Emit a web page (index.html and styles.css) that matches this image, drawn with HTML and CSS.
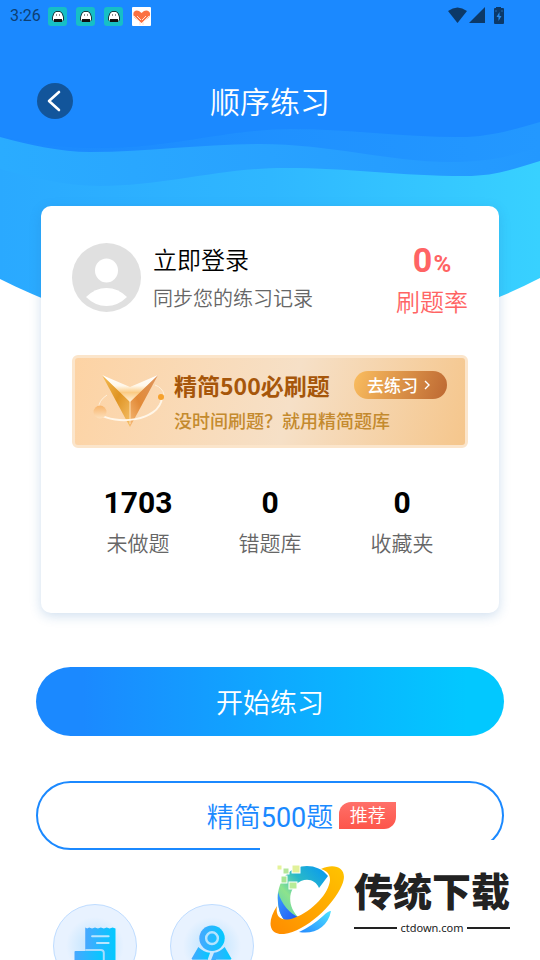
FILE: index.html
```html
<!DOCTYPE html>
<html lang="zh-CN">
<head>
    <meta charset="UTF-8">
    <meta name="viewport" content="width=device-width, initial-scale=1.0">
    <title>顺序练习</title>
    <link rel="stylesheet" href="styles.css">
</head>
<body>
    <!-- Shared icon shapes -->
    <svg class="sprite" aria-hidden="true">
        <defs>
            <linearGradient id="iconBlue" x1="0" y1="0" x2="1" y2="0">
                <stop offset="0" stop-color="#47a8ff"/>
                <stop offset="1" stop-color="#02c9ff"/>
            </linearGradient>
            <symbol id="ghost" viewBox="0 0 19 19">
                <rect width="19" height="19" rx="3" fill="#16bfc6"/>
                <path d="M4.500 13V10L6 6L8 4.500H12L14 6L15.500 10V13L14 14.500H6Z" fill="#fff" stroke="#173c42" stroke-width="1"/>
                <path d="M6 12H14V15H6Z" fill="#111"/>
                <path d="M8 8H9M11 8H12" stroke="#222" stroke-width="1"/>
            </symbol>
        </defs>
    </svg>

    <div class="page">
        <svg class="waves" viewBox="0 0 540 340" preserveAspectRatio="none" aria-hidden="true">
            <defs>
                <linearGradient id="waveBase" x1="0" y1="0" x2="1" y2="0">
                    <stop offset="0" stop-color="#2aa9ff"/>
                    <stop offset="0.5" stop-color="#2fb7ff"/>
                    <stop offset="1" stop-color="#38d1ff"/>
                </linearGradient>
                <linearGradient id="waveMid" x1="0" y1="0" x2="1" y2="0">
                    <stop offset="0" stop-color="#2aacff"/>
                    <stop offset="0.5" stop-color="#28a2ff"/>
                    <stop offset="1" stop-color="#2398ff"/>
                </linearGradient>
                <linearGradient id="waveTop" x1="0" y1="0" x2="1" y2="0">
                    <stop offset="0" stop-color="#1b89ff"/>
                    <stop offset="1" stop-color="#2398ff"/>
                </linearGradient>
            </defs>
            <path fill="url(#waveBase)" d="M0 0H540V278C455 322 380 336 270 336C160 336 90 324 0 279Z"/>
            <path fill="url(#waveMid)" d="M0 0H540V161C510 170 495 176 465 176C400 176 350 168 285 168C220 168 165 186 100 186C65 186 30 177 0 169Z"/>
            <path fill="url(#waveTop)" d="M0 0H540V147C510 156 490 162 450 162C390 162 330 144 260 144C200 144 150 152 90 152C60 152 30 145 0 137Z"/>
            <path fill="#1b89ff" d="M0 0H540V122C515 129 490 137 460 137C400 137 350 129 290 129C230 129 170 148 100 148C60 148 30 143 0 136Z"/>
        </svg>

        <div class="status-bar">
            <span class="time">3:26</span>
            <svg class="app-icon"><use href="#ghost"/></svg>
            <svg class="app-icon"><use href="#ghost"/></svg>
            <svg class="app-icon"><use href="#ghost"/></svg>
            <svg class="app-icon" viewBox="0 0 19 19">
                <rect width="19" height="19" rx="1" fill="#fff"/>
                <path d="M9.500 16L3 11C-1 6 3 2 7 4L9.500 6L12 4C16 2 21 6 16 11Z" fill="#fb7142"/>
                <path d="M2 9L8 15V18M17 9L11 15V18M5 9L9 13M14 9L10 13" fill="none" stroke="#ffe1d4" stroke-width="1"/>
            </svg>
            <svg class="system-icons" viewBox="0 0 56 18">
                <path d="M0 4Q9.500 -3 19 4L9.500 16Z" fill="#0c3968"/>
                <path d="M21 16H37V0Z" fill="#0c3968"/>
                <path d="M48 0H53V1H55Q56 1 56 2V16Q56 17 55 17H47Q46 17 46 16V2Q46 1 47 1H48Z" fill="#0c3968"/>
                <path d="M51.500 5L48.500 10H50.500V14L53.500 9H51.500Z" fill="#2589ec"/>
                <path d="M48 3V5M54 3V5" stroke="#2468aa"/>
            </svg>
        </div>

        <header class="nav-bar">
            <button type="button" class="back-button" aria-label="返回">
                <svg viewBox="0 0 36 36"><path d="M22 9L12 18L22 27" fill="none" stroke="#fff" stroke-width="2.600" stroke-linecap="round" stroke-linejoin="round"/></svg>
            </button>
            <h1>顺序练习</h1>
        </header>

        <main>
            <section class="card">
                <div class="user-row">
                    <svg class="avatar" viewBox="0 0 69 69" aria-hidden="true">
                        <circle cx="34.500" cy="34.500" r="34.500" fill="#e0e0e0"/>
                        <ellipse cx="34.500" cy="27.500" rx="11.500" ry="12" fill="#fff"/>
                        <path d="M14 54Q23 45 34.500 45Q46 45 55 54Q46 63 34.500 63Q23 63 14 54Z" fill="#fff"/>
                    </svg>
                    <div class="user-text">
                        <a href="#" class="login-link">立即登录</a>
                        <p>同步您的练习记录</p>
                    </div>
                    <div class="rate">
                        <strong>0<small>%</small></strong>
                        <span>刷题率</span>
                    </div>
                </div>

                <div class="banner">
                    <svg class="banner-logo" viewBox="0 0 76 60" aria-hidden="true">
                        <defs>
                            <linearGradient id="goldLeft" x1="0" y1="0" x2="1" y2="1">
                                <stop offset="0" stop-color="#f5bd55"/>
                                <stop offset="0.5" stop-color="#df9423"/>
                                <stop offset="1" stop-color="#f6c16b"/>
                            </linearGradient>
                            <linearGradient id="goldRight" x1="1" y1="0" x2="0" y2="1">
                                <stop offset="0" stop-color="#dd9560"/>
                                <stop offset="0.6" stop-color="#e28a37"/>
                                <stop offset="1" stop-color="#f6ba78"/>
                            </linearGradient>
                            <linearGradient id="goldTop" x1="0" y1="0" x2="0" y2="1">
                                <stop offset="0" stop-color="#fff"/>
                                <stop offset="0.4" stop-color="#fff7e9"/>
                                <stop offset="0.65" stop-color="#fbcb83"/>
                                <stop offset="1" stop-color="#fff1db"/>
                            </linearGradient>
                            <linearGradient id="planet" x1="0" y1="0" x2="0" y2="1">
                                <stop offset="0" stop-color="#f7b46b"/>
                                <stop offset="1" stop-color="#fde0bc"/>
                            </linearGradient>
                        </defs>
                        <path d="M14 23Q5 29 6 36M62 13Q70 16 71 23" fill="none" stroke="#fff0db" stroke-width="1"/>
                        <path d="M9 3L37 27V55Z" fill="url(#goldLeft)"/>
                        <path d="M65 3L37 27V55Z" fill="url(#goldRight)"/>
                        <path d="M9 3L37 15L65 3L37 30Z" fill="url(#goldTop)"/>
                        <path d="M37 29V52" stroke="#ffe0b4" stroke-width="1"/>
                        <path d="M6 42C22 53 66 50 69 26" fill="none" stroke="#fff6e8" stroke-width="2"/>
                        <circle cx="7" cy="40" r="6.500" fill="url(#planet)"/>
                        <circle cx="68" cy="25" r="3" fill="#f6a12c"/>
                    </svg>
                    <div class="banner-text">
                        <div class="banner-head">
                            <h2>精简500必刷题</h2>
                            <button type="button" class="go-button">去练习
                                <svg viewBox="0 0 6 10"><path d="M1 1L5 5L1 9" fill="none" stroke="#fff" stroke-width="1.400"/></svg>
                            </button>
                        </div>
                        <p>没时间刷题？就用精简题库</p>
                    </div>
                </div>

                <div class="stats">
                    <div class="stat"><strong>1703</strong><span>未做题</span></div>
                    <div class="stat"><strong>0</strong><span>错题库</span></div>
                    <div class="stat"><strong>0</strong><span>收藏夹</span></div>
                </div>
            </section>

            <div class="actions">
                <button type="button" class="action start">开始练习</button>
                <button type="button" class="action simple">
                    <span class="action-label">精简<span class="count">500</span>题<span class="tag">推荐</span></span>
                </button>
            </div>

            <div class="features">
                <button type="button" class="feature" aria-label="练习记录">
                    <svg viewBox="0 0 84 84">
                        <path d="M32 23L34 24L36 23L39 24L42 23L45 24L48 23L51 24L54 23L57 24L60 23L63 24V62H32Z" fill="url(#iconBlue)"/>
                        <path d="M39 32H56M44 39H56" stroke="#b9e6ff" stroke-width="2" stroke-linecap="round"/>
                        <path d="M22 47H48Q51 47 51 50V62H22Q21 62 21 61V48Q21 47 22 47Z" fill="url(#iconBlue)"/>
                        <path d="M32 46H48Q51 46 51 49V62" fill="none" stroke="#a8ddff" stroke-width="2"/>
                    </svg>
                </button>
                <button type="button" class="feature" aria-label="考试成绩">
                    <svg viewBox="0 0 84 84">
                        <path d="M28 43Q33 48 40 49L34 66L21 55Z" fill="url(#iconBlue)"/>
                        <path d="M55 43Q50 48 44 49L40 59L49 66L62 55Z" fill="url(#iconBlue)"/>
                        <path d="M22 56H37M46 56H61" stroke="#76ceff" stroke-width="1"/>
                        <circle cx="42" cy="34" r="13" fill="url(#iconBlue)"/>
                        <circle cx="42" cy="34" r="6" fill="none" stroke="#b5e4ff" stroke-width="2.500"/>
                    </svg>
                </button>
            </div>
        </main>

        <aside class="site-mark">
            <svg class="site-logo" viewBox="0 0 74 70" aria-hidden="true">
                <defs>
                    <linearGradient id="arcTop" x1="1" y1="0" x2="0" y2="1">
                        <stop offset="0" stop-color="#0595f5"/>
                        <stop offset="0.4" stop-color="#29b9c8"/>
                        <stop offset="0.65" stop-color="#8de38d"/>
                        <stop offset="1" stop-color="#50cbbd"/>
                    </linearGradient>
                    <linearGradient id="arcSide" x1="0" y1="0" x2="1" y2="1">
                        <stop offset="0" stop-color="#3b9cff"/>
                        <stop offset="1" stop-color="#1c4ff2"/>
                    </linearGradient>
                    <linearGradient id="arcLow" x1="0" y1="1" x2="1" y2="0">
                        <stop offset="0" stop-color="#2589ff"/>
                        <stop offset="1" stop-color="#4de3ff"/>
                    </linearGradient>
                    <linearGradient id="ring" x1="0" y1="1" x2="1" y2="0">
                        <stop offset="0" stop-color="#ff8b00"/>
                        <stop offset="1" stop-color="#ffc400"/>
                    </linearGradient>
                </defs>
                <path d="M58 11C48 -2 28 -2 17 9C8 18 6 32 9 44C10 50 14 55 18 58L29 53C16 41 18 22 31 16C39 13 46 16 49 23Z" fill="url(#arcTop)"/>
                <path d="M8 27C7 42 10 53 18 58L30 53C19 48 12 40 8 27Z" fill="url(#arcSide)"/>
                <path d="M29 67C44 70 58 62 61 46Q58 46 53 51Q42 61 29 67Z" fill="url(#arcLow)"/>
                <path d="M51 4C66 -3 79 4 72 20C63 41 36 66 14 69C-2 70 -3 56 7 41C5 53 12 57 24 53C43 46 59 28 60 15C60 9 57 6 51 4Z" fill="url(#ring)"/>
                <g stroke="#fff" stroke-width="1">
                    <rect x="7" y="0" width="5" height="5" fill="#e5f39a"/>
                    <rect x="13" y="3" width="6" height="6" fill="#b4e69a"/>
                    <rect x="22" y="0" width="8" height="8" fill="#e1f19a"/>
                    <rect x="11" y="11" width="6" height="7" fill="#a8e594"/>
                    <rect x="19" y="17" width="8" height="7" fill="#b7ec98"/>
                </g>
            </svg>
            <div class="site-name">
                <strong>传统下载</strong>
                <span class="site-url">ctdown.com</span>
            </div>
        </aside>
    </div>
</body>
</html>
```
FILE: styles.css
```css
* {
    box-sizing: border-box;
}
body {
    margin: 0;
    font-family: Roboto, "Noto Sans CJK SC", sans-serif;
    background-color: #fff;
    color: #000;
}
h1, h2, p {
    margin: 0;
}
button {
    padding: 0;
    border: none;
    font-family: inherit;
    cursor: pointer;
}
svg {
    display: block;
    flex-shrink: 0;
}
.sprite {
    position: absolute;
    width: 0;
    height: 0;
}
.page {
    position: relative;
    height: 100vh;
    overflow: hidden;
}
/* Wave background lies behind the header and the card */
.waves {
    position: absolute;
    top: 0;
    left: 0;
    width: 100%;
    height: 340px;
    z-index: -1;
}

/* Status bar */
.status-bar {
    display: flex;
    align-items: center;
    gap: 9px;
    height: 32px;
    padding: 0 36px 0 10px;
}
.time {
    font-size: 16px;
    line-height: 20px;
    color: #0d3f73;
    margin-right: -2px;
}
.app-icon {
    width: 19px;
    height: 19px;
}
.system-icons {
    width: 56px;
    height: 18px;
    margin-left: auto;
}

/* Title bar */
.nav-bar {
    display: grid;
    grid-template-columns: 36px 1fr 36px;
    align-items: center;
    padding: 44px 37px 0;
    height: 124px;
    align-content: start;
}
.back-button {
    width: 36px;
    height: 36px;
    border-radius: 50%;
    background-color: #12559b;
}
.nav-bar h1 {
    padding-top: 4px;
    font-size: 30px;
    line-height: 46px;
    font-weight: 350;
    color: #fff;
    text-align: center;
}

/* Card */
.card {
    margin: 50px 41px 54px;
    padding: 37px 31px 49px;
    border-radius: 10px;
    background-color: #fff;
    box-shadow: 0 3px 12px rgba(40, 110, 180, 0.22);
}
.user-row {
    display: flex;
    align-items: flex-start;
    gap: 12px;
}
.avatar {
    width: 69px;
    height: 69px;
}
.user-text {
    flex: 1;
}
.login-link {
    display: block;
    font-size: 24px;
    line-height: 36px;
    font-weight: 350;
    color: #000;
    text-decoration: none;
}
.user-text p {
    font-size: 20px;
    line-height: 40px;
    font-weight: 350;
    color: #666;
}
.rate {
    display: flex;
    flex-direction: column;
    align-items: center;
    color: #ff6464;
}
.rate strong {
    height: 36px;
    font-size: 34px;
    line-height: 34px;
}
.rate small {
    font-size: 24px;
    margin-left: 1px;
}
.rate span {
    font-size: 24px;
    line-height: 48px;
    font-weight: 350;
}

/* Promo banner */
.banner {
    display: flex;
    align-items: center;
    height: 93px;
    margin-top: 28px;
    padding: 0 18px;
    border: 3px solid #fbe5cb;
    border-radius: 6px;
    background: linear-gradient(105deg, #fdd3a4 0%, #f6e0c7 55%, #f5c68c 100%);
}
.banner-logo {
    width: 76px;
    height: 60px;
    margin-right: 5px;
}
.banner-text {
    flex: 1;
    white-space: nowrap;
    font-family: "Noto Sans CJK SC", sans-serif;
}
.banner-head {
    display: flex;
    justify-content: space-between;
    align-items: center;
}
.banner h2 {
    font-size: 23px;
    line-height: 36px;
    font-weight: 700;
    color: #a6560a;
}
.banner p {
    font-size: 18px;
    line-height: 34px;
    font-weight: 500;
    color: #c48a2e;
}
.go-button {
    display: flex;
    align-items: center;
    gap: 6px;
    width: 93px;
    height: 28px;
    padding-left: 13px;
    border-radius: 14px;
    background: linear-gradient(110deg, #fabd5f, #bd6832);
    color: #fff;
    font-size: 17px;
    font-weight: 500;
    line-height: 28px;
}
.go-button svg {
    width: 6px;
    height: 10px;
}

/* Counters */
.stats {
    display: grid;
    grid-template-columns: repeat(3, 1fr);
    margin-top: 34px;
}
.stat {
    display: flex;
    flex-direction: column;
    align-items: center;
}
.stat strong {
    font-size: 30px;
    line-height: 42px;
}
.stat span {
    font-size: 21px;
    line-height: 40px;
    font-weight: 350;
    color: #666;
}

/* Big buttons */
.actions {
    display: flex;
    flex-direction: column;
    gap: 45px;
    padding: 0 36px;
}
.action {
    height: 69px;
    border-radius: 35px;
    font-size: 27px;
    font-weight: 350;
}
.start {
    background: linear-gradient(90deg, #1b89ff 10%, #02c8ff 92%);
    color: #fff;
}
.simple {
    border: 2px solid #1b89ff;
    background-color: #fff;
    color: #1b89ff;
}
.action-label {
    position: relative;
}
.count {
    font-weight: 400;
}
.tag {
    position: absolute;
    top: 0;
    left: 100%;
    width: 57px;
    margin-left: 6px;
    border-radius: 12px 0;
    background: linear-gradient(#ff7069, #fd554a);
    color: #fff;
    font-size: 18px;
    line-height: 27px;
}

/* Feature shortcuts */
.features {
    display: grid;
    grid-template-columns: repeat(4, 1fr);
    justify-items: center;
    padding: 54px 36px 0;
}
.feature {
    width: 84px;
    height: 84px;
    border: 1px solid #bedcff;
    border-radius: 50%;
    background: radial-gradient(#cbe8ff 20%, #e8f2ff 50%);
}

/* Site mark over the bottom corner */
.site-mark {
    position: absolute;
    right: 0;
    bottom: 0;
    display: flex;
    align-items: center;
    gap: 10px;
    width: 280px;
    height: 120px;
    padding-left: 10px;
    background-color: #fff;
}
.site-logo {
    width: 74px;
    height: 70px;
}
.site-name {
    padding-top: 2px;
    color: #222;
    white-space: nowrap;
}
.site-name strong {
    display: block;
    font-family: "Noto Sans CJK SC", sans-serif;
    font-size: 39px;
    line-height: 54px;
    font-weight: 900;
}
.site-url {
    display: flex;
    align-items: center;
    gap: 3px;
    font-family: "Noto Sans", sans-serif;
    font-size: 11px;
    line-height: 24px;
}
.site-url::before,
.site-url::after {
    content: "";
    flex: 1;
    height: 2px;
    background-color: #222;
}
```
